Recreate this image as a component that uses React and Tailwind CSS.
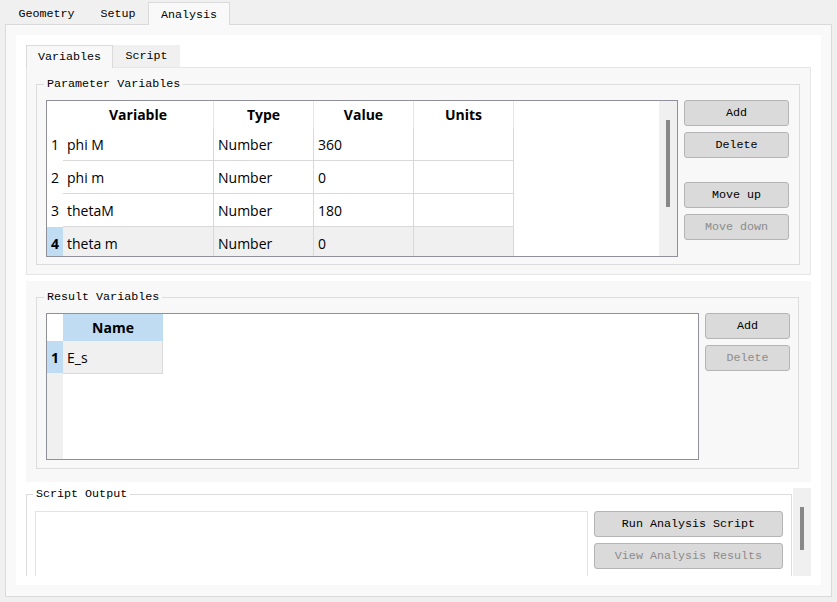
import React from 'react'

const mono = "font-['Liberation_Mono',monospace] text-[11.7px]"
const sans = "font-['Open_Sans','Noto_Sans',sans-serif] text-[14px] text-black"

const paramRows = [
  { name: 'phi M', type: 'Number', value: '360' },
  { name: 'phi m', type: 'Number', value: '0' },
  { name: 'thetaM', type: 'Number', value: '180' },
  { name: 'theta m', type: 'Number', value: '0', selected: true },
]

function Button({ children, disabled, className = '' }) {
  return (
    <button
      type="button"
      disabled={disabled}
      className={`flex h-[26px] items-center justify-center rounded-[3px] border border-[#b4b4b4] bg-[#dadada] pt-[2px] ${mono} ${disabled ? 'text-[#8c8c8c]' : 'text-black'} ${className}`}
    >
      {children}
    </button>
  )
}

// fieldset keeps the title sitting on the top border line
function GroupBox({ title, className = '', legendClass = 'ml-[7px] leading-[14px]', bodyClass = '', children }) {
  return (
    <fieldset className={`border border-[#dcdcdc] ${className}`}>
      <legend className={`px-[3px] text-black ${legendClass} ${mono}`}>{title}</legend>
      <div className={bodyClass}>{children}</div>
    </fieldset>
  )
}

function ScrollBar({ className = '', thumb }) {
  return (
    <div className={`w-[18px] shrink-0 bg-[#f0f0f0] ${className}`}>
      <div className={`ml-[7px] w-[4px] bg-[#888888] ${thumb}`} />
    </div>
  )
}

function ParameterTable() {
  const cell = 'flex items-center pl-[4px] border-r border-[#d9d9d9]'
  return (
    <div className={`flex h-[157px] w-[632px] border border-[#8f909a] bg-white ${sans}`}>
      <div className="flex-1 overflow-hidden">
        <div className="flex h-[27px] font-bold">
          <div className="w-[16px]" />
          <div className="flex w-[151px] items-center justify-center border-r border-[#e6e6e6]">Variable</div>
          <div className="flex w-[100px] items-center justify-center border-r border-[#e6e6e6]">Type</div>
          <div className="flex w-[100px] items-center justify-center border-r border-[#e6e6e6]">Value</div>
          <div className="flex w-[100px] items-center justify-center border-r border-[#e6e6e6]">Units</div>
        </div>
        {paramRows.map((row, i) => (
          <div key={row.name} className="flex h-[33px]">
            <div
              className={`flex w-[16px] items-center justify-center ${row.selected ? 'bg-[#bfdcf3] font-bold' : ''}`}
            >
              {i + 1}
            </div>
            <div className={`flex ${row.selected ? 'bg-[#f0f0f0]' : 'border-b border-[#d9d9d9]'}`}>
              <div className={`${cell} w-[151px]`}>{row.name}</div>
              <div className={`${cell} w-[100px]`}>{row.type}</div>
              <div className={`${cell} w-[100px]`}>{row.value}</div>
              <div className={`${cell} w-[100px]`} />
            </div>
          </div>
        ))}
      </div>
      <ScrollBar thumb="mt-[19px] h-[87px]" />
    </div>
  )
}

function ResultTable() {
  return (
    <div className={`flex h-[147px] w-[653px] border border-[#8f909a] bg-white ${sans}`}>
      <div className="flex w-[16px] flex-col bg-[#f0f0f0]">
        <div className="h-[27px] bg-white" />
        <div className="flex h-[32px] items-center justify-center bg-[#bfdcf3] font-bold">1</div>
      </div>
      <div className="flex flex-col">
        <div className="flex h-[27px] w-[100px] items-center justify-center bg-[#bfdcf3] font-bold">Name</div>
        <div className="flex h-[33px] w-[100px] items-center border-r border-b border-[#d9d9d9] bg-[#f0f0f0] pl-[4px]">
          E_s
        </div>
      </div>
    </div>
  )
}

export default function App() {
  return (
    <div className="h-[602px] w-[837px] overflow-hidden bg-[#f0f0f0]">
      {/* top tab bar */}
      <div className={`flex h-[24px] items-end pl-[5px] text-black ${mono}`}>
        <div className="flex h-[22px] w-[83px] items-center justify-center pt-[3px]">Geometry</div>
        <div className="flex h-[22px] w-[60px] items-center justify-center pt-[3px]">Setup</div>
        <div className="relative z-10 -mb-px flex h-[23px] w-[82px] items-center justify-center border border-b-0 border-[#dadada] bg-[#f9f9f9] pt-[3px]">
          Analysis
        </div>
      </div>

      <div className="ml-[5px] h-[573px] w-[827px] border border-[#dadada] bg-[#f9f9f9] pl-[10px] pt-[10px]">
        <div className="flex h-[550px] w-[805px] flex-col bg-white pl-[10px] pt-[10px]">
          {/* Variables / Script tabs */}
          <div className={`flex h-[22px] items-end text-black ${mono}`}>
            <div className="relative z-10 -mb-px flex h-[23px] w-[87px] items-center justify-center border border-b-0 border-[#dadada] bg-[#f8f8f8] pt-[2px]">
              Variables
            </div>
            <div className="flex h-[22px] w-[67px] items-center justify-center bg-[#f0f0f0] pt-[2px]">Script</div>
          </div>
          <div className="h-[208px] w-[785px] border border-[#e6e6e6] bg-[#f8f8f8] pl-[9px] pt-[9px]">
            <GroupBox title="Parameter Variables" className="h-[188px] w-[764px]" bodyClass="pl-[9px] pt-[9px]">
              <div className="flex">
                <ParameterTable />
                <div className="ml-[6px] flex w-[105px] flex-col">
                  <Button>Add</Button>
                  <Button className="mt-[6px]">Delete</Button>
                  <Button className="mt-[24px]">Move up</Button>
                  <Button className="mt-[6px]" disabled>
                    Move down
                  </Button>
                </div>
              </div>
            </GroupBox>
          </div>

          {/* result variables */}
          <div className="mt-[6px] h-[201px] w-[785px] bg-[#f8f8f8] pl-[10px] pt-[9px]">
            <GroupBox title="Result Variables" className="h-[179px] w-[763px]" bodyClass="pl-[9px] pt-[9px]">
              <div className="flex">
                <ResultTable />
                <div className="ml-[6px] flex w-[85px] flex-col">
                  <Button>Add</Button>
                  <Button className="mt-[6px]" disabled>
                    Delete
                  </Button>
                </div>
              </div>
            </GroupBox>
          </div>

          {/* script output */}
          <div className="mt-[6px] flex h-[88px] w-[785px] overflow-hidden">
            <GroupBox
              title="Script Output"
              legendClass="ml-[6px] leading-[12px]"
              className="h-[140px] w-[767px]"
              bodyClass="pl-[8px] pt-[11px]"
            >
              <div className="flex">
                <div className="h-[100px] w-[553px] border border-b-0 border-[#e3e3e3] bg-white" />
                <div className="ml-[6px] flex w-[189px] flex-col">
                  <Button>Run Analysis Script</Button>
                  <Button className="mt-[6px]" disabled>
                    View Analysis Results
                  </Button>
                </div>
              </div>
            </GroupBox>
            <ScrollBar className="ml-px" thumb="mt-[19px] h-[43px]" />
          </div>
        </div>
      </div>
    </div>
  )
}
